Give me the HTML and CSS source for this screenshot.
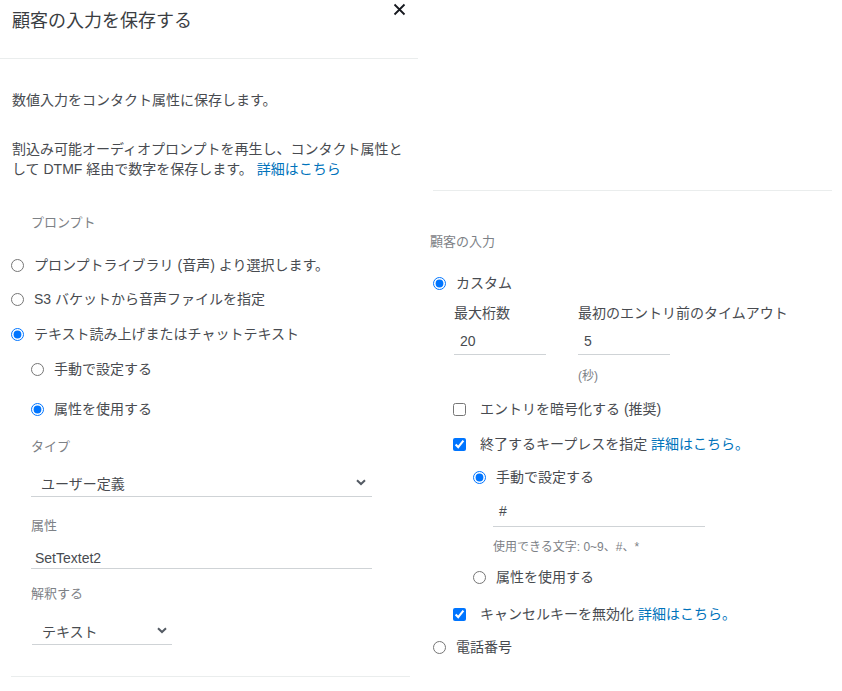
FILE: index.html
```html
<!DOCTYPE html>
<html lang="ja">
<head>
<meta charset="utf-8">
<title>顧客の入力を保存する</title>
<link rel="stylesheet" href="styles.css">
</head>
<body>
<div class="page">
  <section class="left">
    <header class="head">
      <h1 class="title">顧客の入力を保存する</h1>
      <button class="close" aria-label="閉じる">
        <svg width="13" height="13" viewBox="0 0 13 13"><path d="M1.5 1.5 L11.5 11.5 M11.5 1.5 L1.5 11.5" stroke="#16191f" stroke-width="1.8" fill="none"/></svg>
      </button>
    </header>
    <div class="lbody">
      <p class="p1">数値入力をコンタクト属性に保存します。</p>
      <div class="p2">
        <div class="pline">割込み可能オーディオプロンプトを再生し、コンタクト属性と</div>
        <div class="pline">して DTMF 経由で数字を保存します。 <a class="link" href="#">詳細はこちら</a></div>
      </div>
      <div class="label l-prompt">プロンプト</div>
      <label class="opt r1"><input type="radio" name="p"><span>プロンプトライブラリ (音声) より選択します。</span></label>
      <label class="opt r2"><input type="radio" name="p"><span>S3 バケットから音声ファイルを指定</span></label>
      <label class="opt r3"><input type="radio" name="p" checked><span>テキスト読み上げまたはチャットテキスト</span></label>
      <label class="opt sub r4"><input type="radio" name="m"><span>手動で設定する</span></label>
      <label class="opt sub r5"><input type="radio" name="m" checked><span>属性を使用する</span></label>
      <div class="label l-type">タイプ</div>
      <div class="select sel1"><span>ユーザー定義</span>
        <svg width="10" height="7" viewBox="0 0 10 7"><path d="M1 1.2 L5 5 L9 1.2" stroke="#545b64" stroke-width="2" fill="none"/></svg>
      </div>
      <div class="label l-attr">属性</div>
      <div class="field f-attr">SetTextet2</div>
      <div class="label l-interp">解釈する</div>
      <div class="select sel2"><span>テキスト</span>
        <svg width="10" height="7" viewBox="0 0 10 7"><path d="M1 1.2 L5 5 L9 1.2" stroke="#545b64" stroke-width="2" fill="none"/></svg>
      </div>
      <div class="rule bottom-rule"></div>
    </div>
  </section>
  <section class="right">
    <div class="rule top-rule"></div>
    <div class="label l-input">顧客の入力</div>
    <label class="opt rr1"><input type="radio" name="c" checked><span>カスタム</span></label>
    <div class="pair">
      <div class="col">
        <div class="flabel">最大桁数</div>
        <div class="field f-num">20</div>
      </div>
      <div class="col">
        <div class="flabel">最初のエントリ前のタイムアウト</div>
        <div class="field f-num">5</div>
        <div class="hint sec">(秒)</div>
      </div>
    </div>
    <label class="opt chk c1"><input type="checkbox"><span>エントリを暗号化する (推奨)</span></label>
    <label class="opt chk c2"><input type="checkbox" checked><span>終了するキープレスを指定 <a class="link" href="#">詳細はこちら。</a></span></label>
    <label class="opt sub2 rr2"><input type="radio" name="k" checked><span>手動で設定する</span></label>
    <div class="field f-hash">#</div>
    <div class="hint allowed">使用できる文字: 0~9、#、*</div>
    <label class="opt sub2 rr3"><input type="radio" name="k"><span>属性を使用する</span></label>
    <label class="opt chk c3"><input type="checkbox" checked><span>キャンセルキーを無効化 <a class="link" href="#">詳細はこちら。</a></span></label>
    <label class="opt rr4"><input type="radio" name="c"><span>電話番号</span></label>
  </section>
</div>
</body>
</html>
```
FILE: styles.css
```css
* { box-sizing: border-box; }
html, body { margin: 0; padding: 0; background: #fff; }
body {
  font-family: "Liberation Sans", "Noto Sans CJK JP", sans-serif;
  font-size: 14px;
  color: #484b50;
  width: 842px;
  height: 691px;
  overflow: hidden;
}
.page {
  display: grid;
  grid-template-columns: 418px 424px;
  column-gap: 0;
}

/* ---------- left ---------- */
.head {
  height: 59px;
  border-bottom: 1px solid #eaeded;
  display: flex;
  justify-content: space-between;
  align-items: flex-start;
  padding: 0 12px 0 12px;
}
.title {
  margin: 9px 0 0;
  font-size: 18px;
  line-height: 24px;
  font-weight: normal;
  color: #3a3d42;
}
.close {
  margin-top: 3px;
  padding: 0;
  border: 0;
  background: none;
  width: 13px;
  height: 13px;
  display: block;
}
.close svg { display: block; }

.lbody { padding-left: 12px; padding-right: 10px; }
p { margin: 0; line-height: 20px; }
.p1 { margin-top: 31px; }
.p2 { margin-top: 29px; width: 396px; }
.pline { line-height: 20px; white-space: nowrap; }
.link { color: #0073bb; text-decoration: none; }

.label {
  font-size: 13px;
  line-height: 20px;
  color: #7d8186;
}
.l-prompt { margin-top: 34px; margin-left: 19px; }

.opt {
  display: flex;
  align-items: center;
  height: 20px;
  line-height: 20px;
}
.opt input {
  margin: 0;
  width: 13px;
  height: 13px;
  accent-color: #0075ff;
  flex: none;
}
.opt span { white-space: nowrap; }
.lbody .opt { margin-left: -1px; }
.lbody .opt input { margin-right: 10px; }
.lbody .opt.sub { margin-left: 19px; }
.r1 { margin-top: 22px; }
.r2 { margin-top: 14px; }
.r3 { margin-top: 15px; }
.r4 { margin-top: 15px; }
.r5 { margin-top: 20px; }

.l-type { margin-top: 18px; margin-left: 19px; }
.select {
  display: flex;
  align-items: center;
  justify-content: space-between;
  border-bottom: 1px solid #cfd3d6;
}
.select svg { display: block; }
.sel1 {
  margin-top: 13px;
  margin-left: 19px;
  width: 341px;
  height: 27px;
  padding: 0 6px 1px 10px;
}
.l-attr { margin-top: 19px; margin-left: 19px; }
.field {
  border-bottom: 1px solid #cfd3d6;
  line-height: 20px;
}
.f-attr {
  margin-top: 12px;
  margin-left: 19px;
  width: 341px;
  height: 21px;
  padding-left: 4px;
}
.l-interp { margin-top: 15px; margin-left: 19px; }
.sel2 {
  margin-top: 14px;
  margin-left: 20px;
  width: 140px;
  height: 27px;
  padding: 0 5px 1px 10px;
}
.rule { height: 1px; background: #eaeded; }
.bottom-rule { margin-top: 31px; margin-left: -1px; width: 399px; }

/* ---------- right ---------- */
.right { padding-left: 12px; }
.top-rule { margin-top: 190px; margin-left: 3px; width: 399px; }
.l-input { margin-top: 41px; }
.right .opt input { margin-right: 10px; }
.rr1 { margin-top: 21px; margin-left: 3px; }
.pair {
  display: flex;
  gap: 32px;
  margin-left: 24px;
  margin-top: 10px;
}
.col { display: flex; flex-direction: column; }
.flabel { line-height: 20px; white-space: nowrap; }
.f-num {
  margin-top: 5px;
  width: 92px;
  height: 27px;
  padding: 3px 0 0 6px;
  line-height: 20px;
}
.hint {
  font-size: 12px;
  line-height: 16px;
  color: #7d8186;
}
.sec { margin-top: 13px; }
.right .chk { margin-left: 23px; }
.right .chk input { margin-right: 14px; }
.c1 { margin-top: 15px; }
.c2 { margin-top: 15px; }
.right .sub2 { margin-left: 43px; }
.rr2 { margin-top: 13px; }
.f-hash {
  margin-top: 12px;
  margin-left: 63px;
  width: 212px;
  height: 28px;
  padding: 2px 0 0 6px;
}
.allowed { margin-top: 12px; margin-left: 63px; }
.rr3 { margin-top: 12px; }
.c3 { margin-top: 17px; }
.rr4 { margin-top: 13px; margin-left: 3px; }
```
